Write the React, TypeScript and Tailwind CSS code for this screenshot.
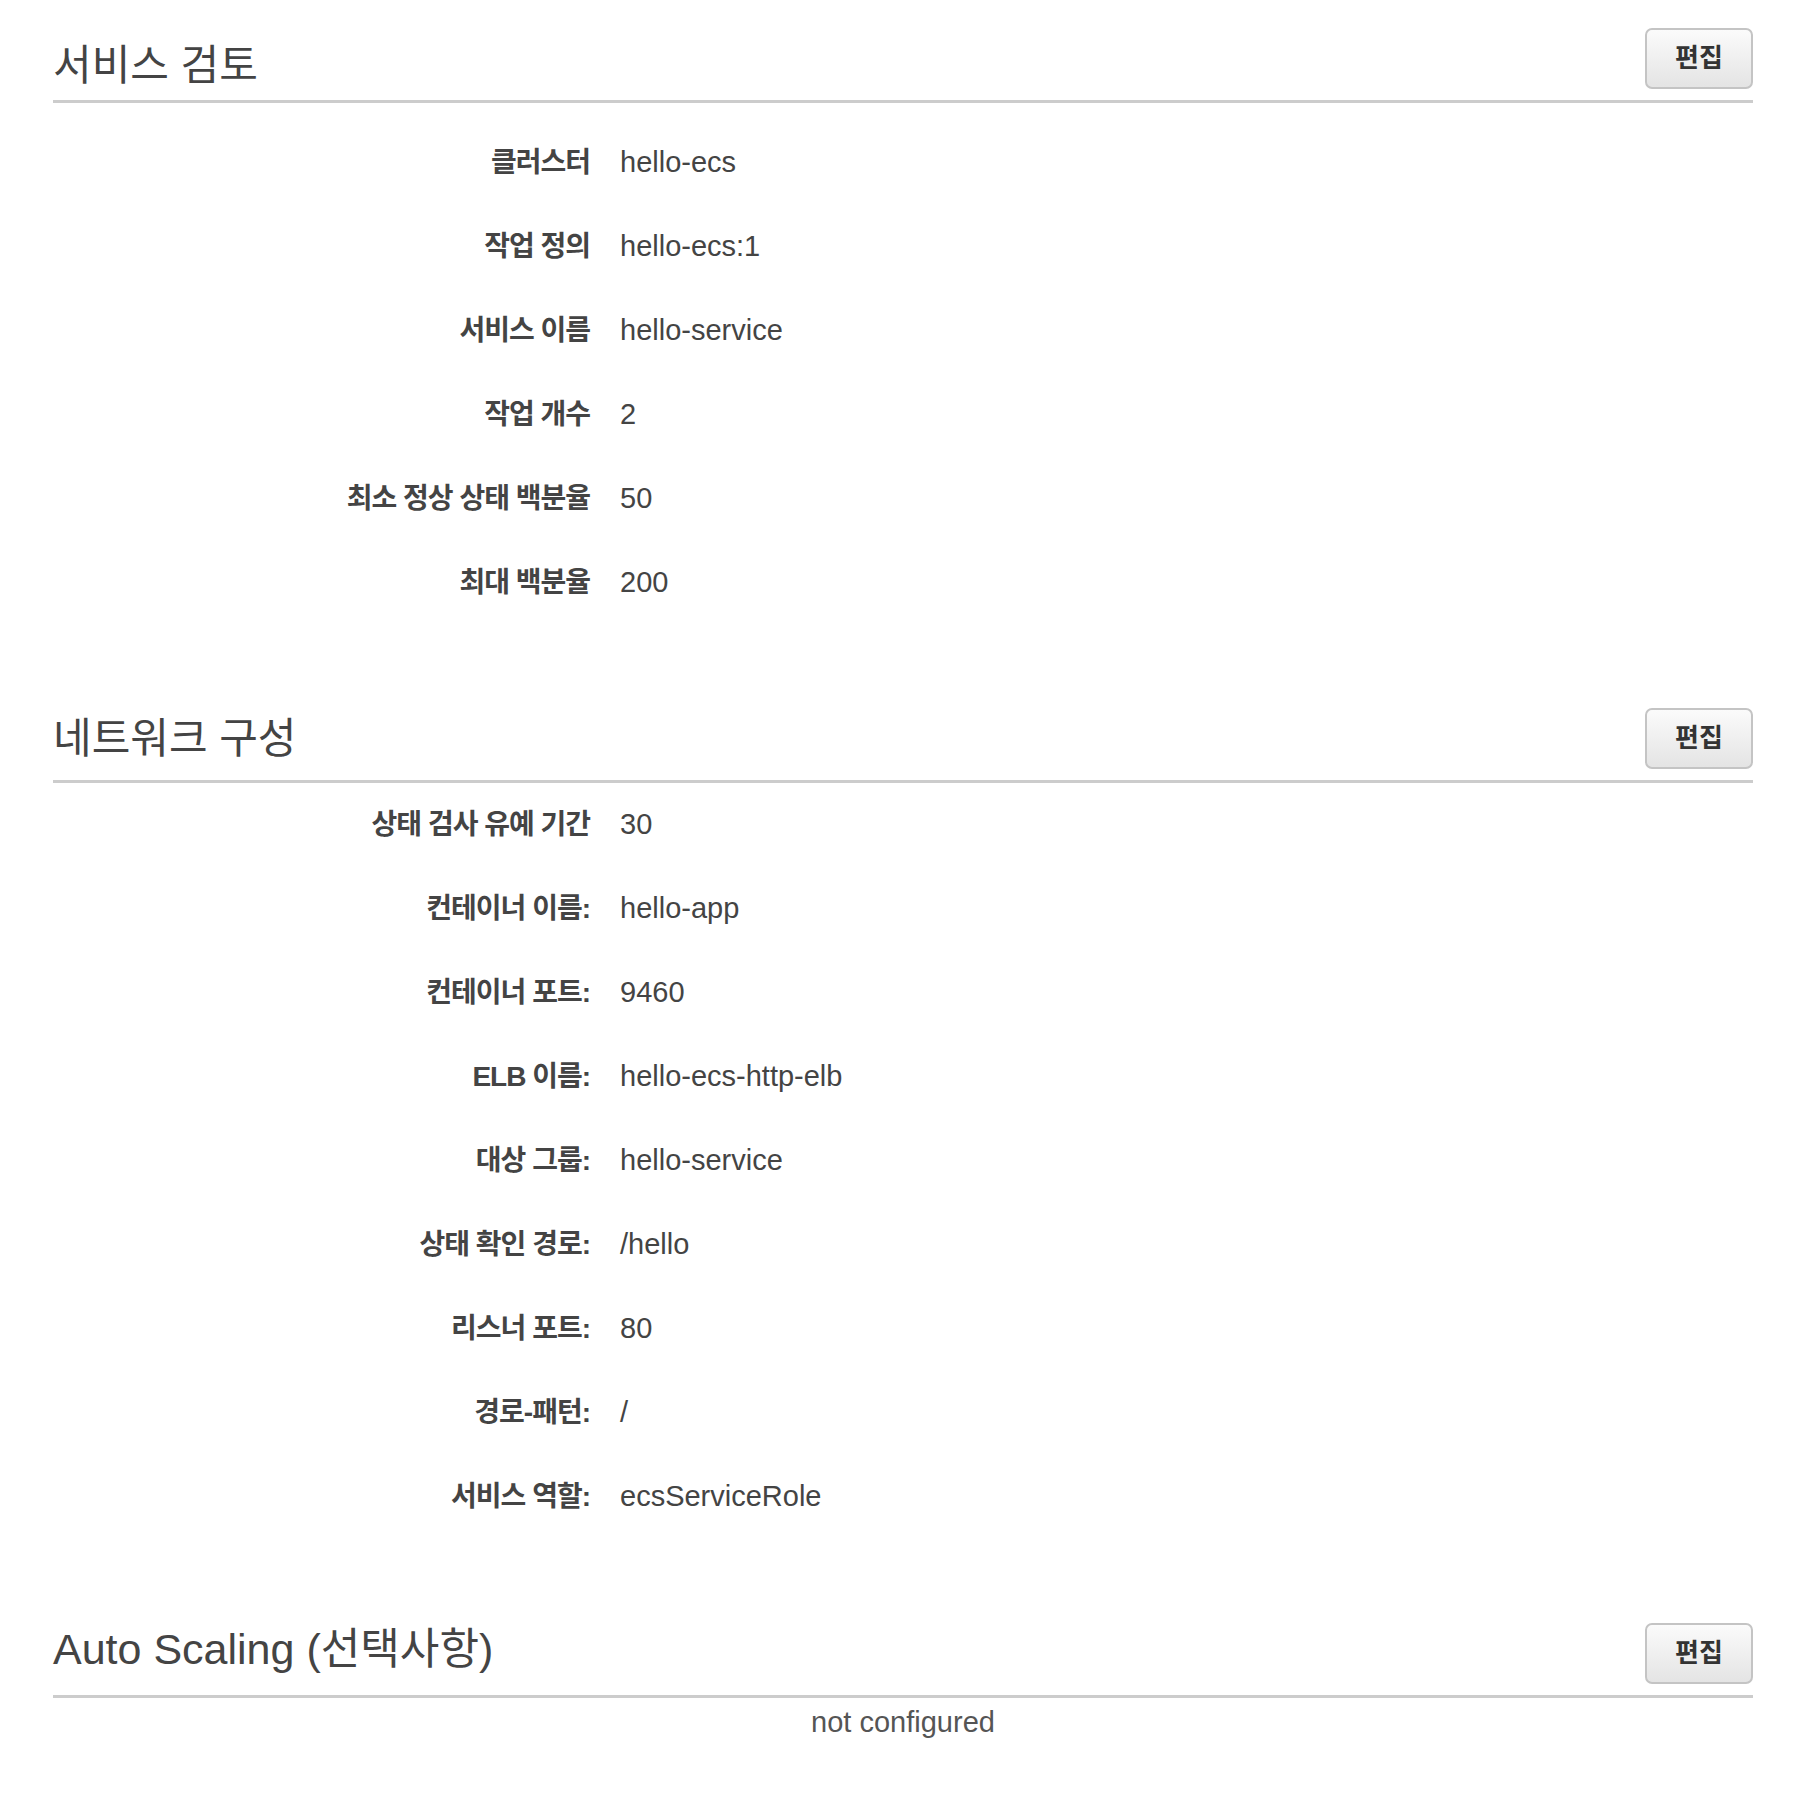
import React from 'react';

const font = { fontFamily: '"Liberation Sans", "Noto Sans CJK KR", sans-serif' };

type Row = { label: string; value: string };

const serviceRows: Row[] = [
    { label: '클러스터', value: 'hello-ecs' },
    { label: '작업 정의', value: 'hello-ecs:1' },
    { label: '서비스 이름', value: 'hello-service' },
    { label: '작업 개수', value: '2' },
    { label: '최소 정상 상태 백분율', value: '50' },
    { label: '최대 백분율', value: '200' },
];

const networkRows: Row[] = [
    { label: '상태 검사 유예 기간', value: '30' },
    { label: '컨테이너 이름:', value: 'hello-app' },
    { label: '컨테이너 포트:', value: '9460' },
    { label: 'ELB 이름:', value: 'hello-ecs-http-elb' },
    { label: '대상 그룹:', value: 'hello-service' },
    { label: '상태 확인 경로:', value: '/hello' },
    { label: '리스너 포트:', value: '80' },
    { label: '경로-패턴:', value: '/' },
    { label: '서비스 역할:', value: 'ecsServiceRole' },
];

const SectionHeader = ({ title, titleClass }: { title: string; titleClass: string }) => (
    <div className="flex items-center justify-between border-b-[3px] border-[#cccccc] pb-[11px]">
        <h2 className={`text-[42px] leading-[44px] text-[#444444] ${titleClass}`}>{title}</h2>
        <button className="w-[108px] h-[61px] rounded-[7px] border-2 border-[#c4c4c4] bg-gradient-to-b from-[#fbfbfb] to-[#e4e4e4] text-[26px] font-bold text-[#333333]">
            편집
        </button>
    </div>
);

const Rows = ({ rows }: { rows: Row[] }) => (
    <div className="flex flex-col">
        {rows.map((r) => (
            <div key={r.label} className="flex items-center h-[84px] text-[#444444]">
                <div className="w-[537px] text-right text-[28px] font-bold tracking-[-1px]">{r.label}</div>
                <div className="pl-[30px] text-[29px]">{r.value}</div>
            </div>
        ))}
    </div>
);

export default function App() {
    return (
        <div style={font} className="bg-white w-[1814px] h-[1796px] pl-[53px] pr-[61px] pt-[28px]">
            <section>
                <SectionHeader title="서비스 검토" titleClass="pt-[15px]" />
                <div className="pt-[18px]">
                    <Rows rows={serviceRows} />
                </div>
            </section>
            <section className="mt-[83px]">
                <SectionHeader title="네트워크 구성" titleClass="" />
                <Rows rows={networkRows} />
            </section>
            <section className="mt-[84px]">
                <SectionHeader title="Auto Scaling (선택사항)" titleClass="text-[43px] pb-[10px]" />
                <p className="text-center text-[29px] leading-[34px] text-[#555555] pt-[7px]">not configured</p>
            </section>
        </div>
    );
}
